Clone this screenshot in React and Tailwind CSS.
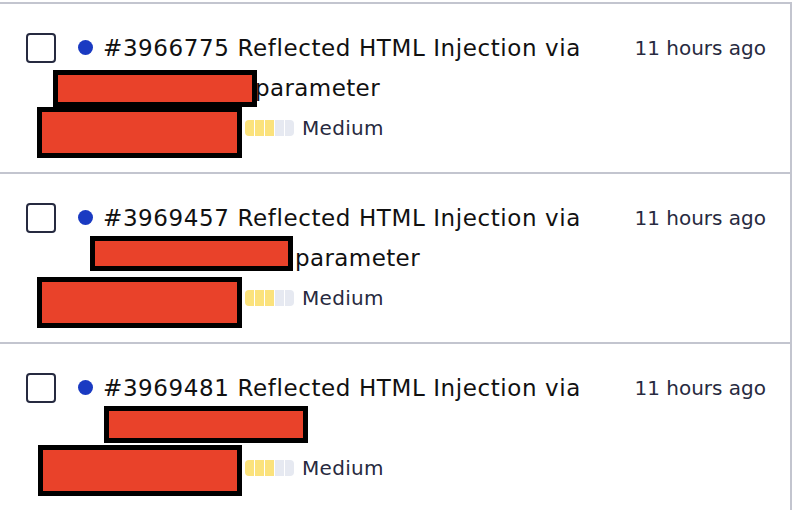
import React from 'react';

const reports = [
  {
    id: '3966775',
    lineTwo: 152,
    tail: 'parameter',
    boxes: [
      { left: 53, top: 66, width: 204, height: 37 },
      { left: 37, top: 103, width: 205, height: 51 },
    ],
  },
  {
    id: '3969457',
    lineTwo: 192,
    tail: 'parameter',
    boxes: [
      { left: 90, top: 62, width: 203, height: 35 },
      { left: 37, top: 103, width: 205, height: 51 },
    ],
  },
  {
    id: '3969481',
    lineTwo: 200,
    tail: '',
    boxes: [
      { left: 104, top: 62, width: 204, height: 37 },
      { left: 38, top: 101, width: 204, height: 51 },
    ],
  },
];

const SeverityBar = ({ level }) => (
  <span className="inline-flex items-center gap-[1px] h-4">
    {[0, 1, 2, 3, 4].map((i) => (
      <span
        key={i}
        className={
          'h-4 w-[9px] ' +
          (i < level ? 'bg-[#fbe27c] ' : 'bg-[#e6e9f1] ') +
          (i === 0 ? 'rounded-l-[4px] ' : '') +
          (i === 4 ? 'rounded-r-[4px]' : '')
        }
      />
    ))}
  </span>
);

const ReportRow = ({ report }) => (
  <div className="relative h-[170px] border-t-2 border-[#c3c5cf] flex pl-[26px] pr-[24px] pt-[24px]">
    <div className="w-[30px] h-[30px] mt-[5px] rounded-[4px] border-2 border-[#262a40] shrink-0" />
    <div className="w-[15px] h-[15px] mt-[12px] ml-[22px] rounded-full bg-[#1a3ac2] shrink-0" />
    <div className="ml-[10px] flex-1 text-[23px] leading-[40px] tracking-[0.6px] text-[#111]">
      <div>#{report.id} Reflected HTML Injection via</div>
      <div className="flex items-center h-[40px] tracking-[0.4px]">
        <span className="inline-block" style={{ width: report.lineTwo }} />
        <span>{report.tail}</span>
      </div>
      <div className="flex items-center gap-[8px] text-[20px] tracking-[0.3px] text-[#272a40]">
        <span className="inline-block w-[134px]" />
        <SeverityBar level={3} />
        <span>Medium</span>
      </div>
    </div>
    <div className="text-[20px] leading-[40px] text-[#272a40] shrink-0">11 hours ago</div>
    {report.boxes.map((b, i) => (
      <div
        key={i}
        className="absolute bg-[#e9422a] border-[5px] border-black"
        style={{ left: b.left, top: b.top, width: b.width, height: b.height }}
      />
    ))}
  </div>
);

export default function App() {
  return (
    <div className="w-[794px] h-[510px] overflow-hidden bg-white pt-[2px]" style={{ fontFamily: '"DejaVu Sans", "Open Sans", sans-serif' }}>
      <div className="w-[792px] border-r-2 border-[#c3c5cf]">
        {reports.map((r) => (
          <ReportRow key={r.id} report={r} />
        ))}
      </div>
    </div>
  );
}
